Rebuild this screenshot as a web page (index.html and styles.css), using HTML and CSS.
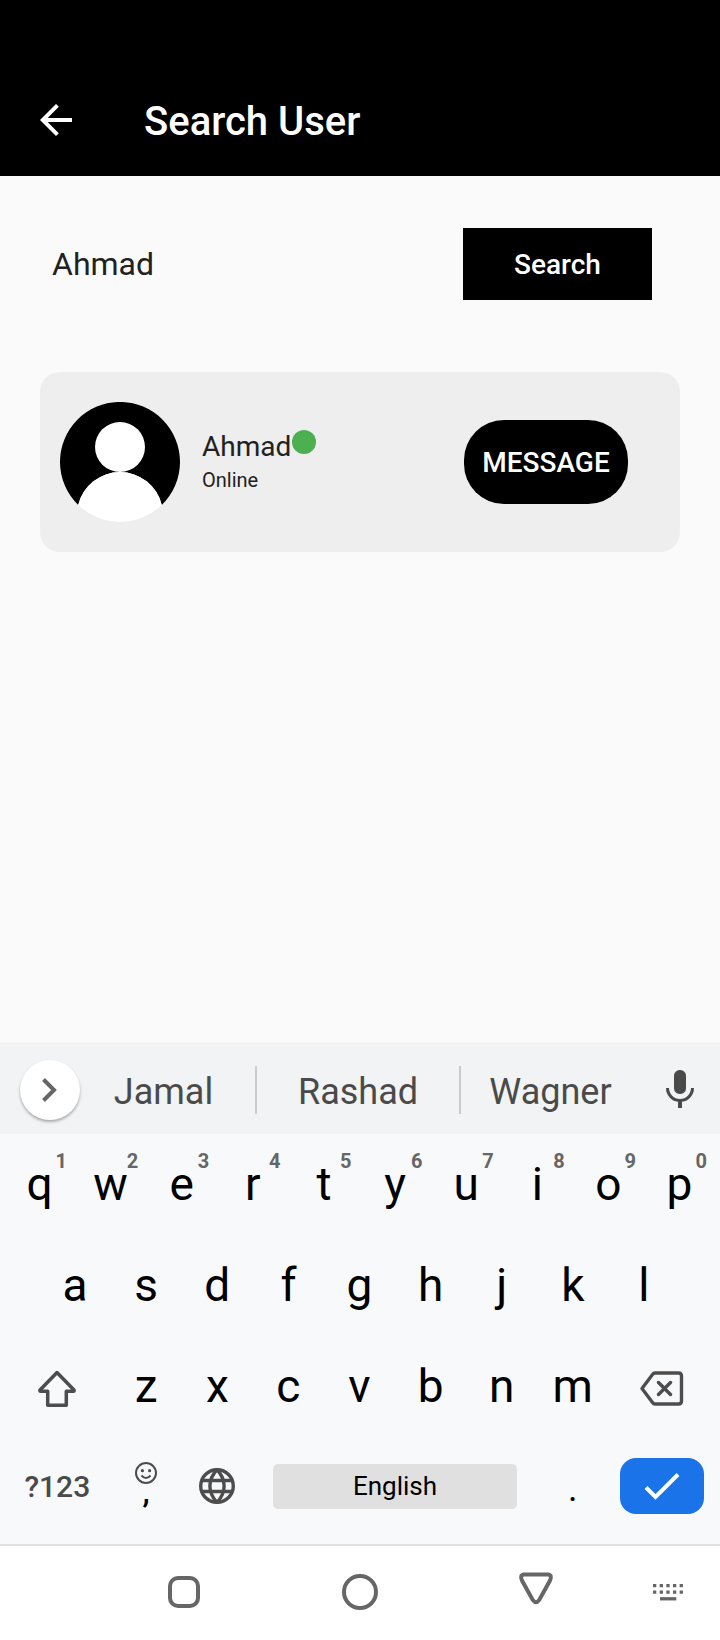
FILE: index.html
```html
<!DOCTYPE html>
<html lang="en">
<head>
<meta charset="utf-8">
<meta name="viewport" content="width=device-width, initial-scale=1">
<title>Search User</title>
<link rel="stylesheet" href="styles.css">
</head>
<body>
<header class="app-bar">
  <button class="back" type="button" aria-label="Back">
    <svg width="48" height="48" viewBox="0 0 24 24" fill="currentColor"><path d="M20 11H7.83l5.59-5.59L12 4l-8 8 8 8 1.41-1.41L7.83 13H20v-2z"/></svg>
  </button>
  <h1 class="title">Search User</h1>
</header>

<main class="content">
  <form class="search">
    <input class="search-input" type="text" value="Ahmad" aria-label="User name">
    <button class="search-button" type="button">Search</button>
  </form>
  <article class="user-card">
    <svg class="avatar" width="120" height="120" viewBox="0 0 120 120" role="img" aria-label="Profile picture">
      <path d="M18.200 103A60 60 0 1 1 101.800 103A43 43 0 0 0 18.200 103Z" fill="#000"/>
      <path d="M18.200 103A43 43 0 0 1 101.800 103A60 60 0 0 1 18.200 103Z" fill="#fff"/>
      <circle cx="60" cy="45" r="25" fill="#fff"/>
    </svg>
    <div class="user-info">
      <div class="user-name">Ahmad<span class="status-dot"></span></div>
      <div class="user-status">Online</div>
    </div>
    <button class="message-button" type="button">MESSAGE</button>
  </article>
</main>

<section class="keyboard" aria-label="Keyboard">
  <div class="suggestions">
    <button class="expand" type="button" aria-label="More">
      <svg width="16" height="24" viewBox="0 0 16 24" fill="none" stroke="#666" stroke-width="4"><path d="M1.500 1.500L12 12 1.500 22.500"/></svg>
    </button>
    <button class="suggestion" type="button">Jamal</button>
    <button class="suggestion" type="button">Rashad</button>
    <button class="suggestion" type="button">Wagner</button>
    <button class="mic" type="button" aria-label="Voice input">
      <svg width="48" height="48" viewBox="0 0 24 24" fill="#4a4a4a"><rect x="9" y="2" width="6" height="12" rx="2.800"/><path d="M5 11a7 7 0 0 0 6 6.920V21h2v-3.080A7 7 0 0 0 19 11h-1.500a5.500 5.500 0 0 1-11 0z"/></svg>
    </button>
  </div>

  <div class="keys">
    <button class="key" type="button">q<span class="hint">1</span></button>
    <button class="key" type="button">w<span class="hint">2</span></button>
    <button class="key" type="button">e<span class="hint">3</span></button>
    <button class="key" type="button">r<span class="hint">4</span></button>
    <button class="key" type="button">t<span class="hint">5</span></button>
    <button class="key" type="button">y<span class="hint">6</span></button>
    <button class="key" type="button">u<span class="hint">7</span></button>
    <button class="key" type="button">i<span class="hint">8</span></button>
    <button class="key" type="button">o<span class="hint">9</span></button>
    <button class="key" type="button">p<span class="hint">0</span></button>

    <button class="key key-first" type="button">a</button>
    <button class="key" type="button">s</button>
    <button class="key" type="button">d</button>
    <button class="key" type="button">f</button>
    <button class="key" type="button">g</button>
    <button class="key" type="button">h</button>
    <button class="key" type="button">j</button>
    <button class="key" type="button">k</button>
    <button class="key" type="button">l</button>

    <button class="key key-wide key-icon key-row-start" type="button" aria-label="Shift">
      <svg width="40" height="40" viewBox="0 0 40 40" fill="none" stroke="#4d4d4d" stroke-width="3.500" stroke-linejoin="round"><path d="M20 4.500L37 22Q37.500 23 36.500 23.200H29.300V37.200H10.700V23.200H3.500Q2.500 23 3 22Z"/></svg>
    </button>
    <button class="key" type="button">z</button>
    <button class="key" type="button">x</button>
    <button class="key" type="button">c</button>
    <button class="key" type="button">v</button>
    <button class="key" type="button">b</button>
    <button class="key" type="button">n</button>
    <button class="key" type="button">m</button>
    <button class="key key-wide key-icon" type="button" aria-label="Backspace">
      <svg width="44" height="36" viewBox="0 0 44 36" fill="none" stroke="#4d4d4d" stroke-width="3.400" stroke-linejoin="round" stroke-linecap="round"><path d="M15 3H38.500Q41.500 3 41.500 6V31Q41.500 34 38.500 34H15Q13.500 34 12.500 32.500L2 18.500 12.500 4.500Q13.500 3 15 3ZM18.500 12.500l12 12M30.500 12.500l-12 12"/></svg>
    </button>

    <button class="key key-wide key-symbols" type="button">?123</button>
    <button class="key key-comma" type="button" aria-label="Comma, emoji">
      <svg width="22" height="22" viewBox="0 0 22 22" fill="none" stroke="#4d4d4d" stroke-width="2"><circle cx="11" cy="11" r="10"/><path d="M6.500 13.500Q11 18.500 15.500 13.500"/><g fill="#4d4d4d" stroke="none"><circle cx="7.400" cy="8.700" r="1.600"/><circle cx="14.600" cy="8.700" r="1.600"/></g></svg>
      <span class="comma">,</span>
    </button>
    <button class="key" type="button" aria-label="Switch language">
      <svg width="36" height="36" viewBox="0 0 36 36" fill="none" stroke="#4d4d4d" stroke-width="3.400"><circle cx="18" cy="18" r="16.300"/><path d="M2.500 12.500h31M2.500 23.500h31M18 1.500C8.500 12 8.500 24 18 34.500M18 1.500C27.500 12 27.500 24 18 34.500"/></svg>
    </button>
    <button class="key key-space" type="button"><span class="space-bar">English</span></button>
    <button class="key key-period" type="button">.</button>
    <button class="key key-wide" type="button" aria-label="Done">
      <span class="enter"><svg width="36" height="28" viewBox="0 0 36 28" fill="none" stroke="#fff" stroke-width="4"><path d="M2 15.500L11.500 25 34 2.500"/></svg></span>
    </button>
  </div>
</section>

<nav class="system-nav" aria-label="System">
  <button class="nav-button nav-recent" type="button" aria-label="Recent apps">
    <svg width="36" height="36" viewBox="0 0 36 36" fill="none" stroke="#666" stroke-width="4"><rect x="4" y="4" width="28" height="28" rx="8"/></svg>
  </button>
  <button class="nav-button" type="button" aria-label="Home">
    <svg width="36" height="36" viewBox="0 0 36 36" fill="none" stroke="#666" stroke-width="4"><circle cx="18" cy="18" r="16"/></svg>
  </button>
  <button class="nav-button" type="button" aria-label="Back">
    <svg width="36" height="40" viewBox="0 0 36 40" fill="none" stroke="#666" stroke-width="4"><path d="M6 2.500H30Q34.500 3 32 8.500L21.500 27.500Q18 33 14.500 27.500L4 8.500Q1.500 3 6 2.500Z"/></svg>
  </button>
  <button class="nav-button" type="button" aria-label="Change keyboard">
    <svg width="30" height="18" viewBox="0 0 30 18" fill="none" stroke="#666" stroke-width="3.300"><path stroke-dasharray="3.300 3.360" d="M0 2.600H30M0 9.200H30"/><path d="M7 15.800H23.300"/></svg>
  </button>
</nav>
</body>
</html>
```
FILE: styles.css
```css
* { box-sizing: border-box; }

body {
  margin: 0;
  min-height: 100vh;
  display: flex;
  flex-direction: column;
  background: #fafafa;
  color: #212121;
  font-family: Roboto, "Liberation Sans", sans-serif;
}

button, input {
  margin: 0;
  padding: 0;
  border: 0;
  background: none;
  color: inherit;
  font: inherit;
}

svg { display: block; flex: none; }

.app-bar {
  display: flex;
  align-items: center;
  gap: 64px;
  padding: 64px 32px 0;
  height: 176px;
  background: #000;
  color: #fff;
}
.title { margin: 0; padding-top: 3px; font-size: 40px; line-height: 48px; font-weight: 500; }

.content { flex: 1; padding: 52px 40px; }

.search {
  display: flex;
  align-items: center;
  padding: 0 28px 0 12px;
  margin-bottom: 72px;
}
.search-input { flex: 1; min-width: 0; height: 72px; font-size: 32px; outline: 0; }
.search-button {
  width: 189px;
  height: 72px;
  background: #000;
  color: #fff;
  font-size: 28px;
  font-weight: 500;
}

.user-card {
  display: flex;
  align-items: center;
  padding: 30px 52px 30px 20px;
  border-radius: 20px;
  background: #eee;
}
.user-info { flex: 1; margin-left: 22px; padding-bottom: 2px; }
.user-name { display: flex; font-size: 28px; line-height: 34px; }
.status-dot { width: 24px; height: 24px; margin-left: 1px; border-radius: 50%; background: #4caf50; }
.user-status { margin-top: 4px; font-size: 20px; line-height: 24px; }
.message-button {
  width: 164px;
  height: 84px;
  border-radius: 40px;
  background: #000;
  color: #fff;
  font-size: 28px;
  font-weight: 500;
}

.keyboard { background: #f8f9fb; color: #000; box-shadow: 0 0 3px rgba(0, 0, 0, 0.1); }

.suggestions {
  display: grid;
  grid-template-columns: 72px 183fr 204fr 181fr 80px;
  align-items: center;
  height: 90px;
  padding-top: 2px;
  background: #f1f3f4;
  color: #4a4a4a;
}
.expand {
  display: flex;
  align-items: center;
  justify-content: center;
  width: 60px;
  height: 60px;
  margin-left: 20px;
  border-radius: 50%;
  background: #fff;
  box-shadow: 0 2px 3px rgba(0, 0, 0, 0.3);
}
.suggestion { height: 48px; padding-top: 4px; font-size: 36px; line-height: 44px; }
.suggestion + .suggestion { border-left: 2px solid #c8cacb; }
.mic { display: flex; justify-content: center; }

.keys {
  display: grid;
  grid-template-columns: repeat(20, 1fr);
  grid-template-rows: repeat(3, 101px) 99px;
  padding: 0 5px 8px 4px;
  border-bottom: 2px solid #e0e0e0;
}
.key {
  position: relative;
  grid-column: span 2;
  display: flex;
  align-items: center;
  justify-content: center;
  padding-bottom: 2px;
  font-size: 46px;
}
.key-first { grid-column: 2 / span 2; }
.key-wide { grid-column: span 3; }
.key-icon { padding: 2px 0 0; }
.key-row-start { grid-column: 1 / span 3; }
.key-symbols { padding-bottom: 0; color: #4a4a4a; font-size: 30px; font-weight: 500; }
.hint {
  position: absolute;
  top: 15px;
  right: 8px;
  color: #666;
  font-size: 20px;
  line-height: 24px;
  font-weight: 700;
}
.key-comma { flex-direction: column; padding-bottom: 12px; }
.comma { font-size: 32px; line-height: 16px; font-weight: 500; }
.key-space { grid-column: span 8; padding: 0 20px; }
.space-bar {
  flex: 1;
  border-radius: 5px;
  background: #e0e0e0;
  font-size: 26px;
  line-height: 45px;
}
.key-period { padding: 4px 0 0; font-size: 36px; }
.enter {
  display: flex;
  align-items: center;
  justify-content: center;
  width: 84px;
  height: 56px;
  border-radius: 16px;
  background: #1a73e8;
}

.system-nav {
  display: grid;
  grid-template-columns: 96fr 176fr 176fr 176fr 88fr;
  align-items: center;
  height: 94px;
  padding: 0 8px 2px 0;
  background: #fff;
}
.nav-button { display: flex; justify-content: center; }
.nav-recent { grid-column: 2; }
```
